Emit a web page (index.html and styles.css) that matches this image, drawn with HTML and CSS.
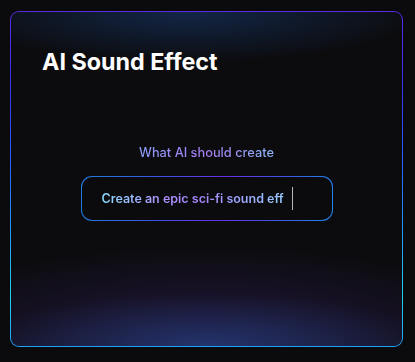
FILE: index.html
```html
<!DOCTYPE html>
<html lang="en">
<head>
<meta charset="utf-8">
<title>AI Sound Effect</title>
<link rel="stylesheet" href="styles.css">
</head>
<body>
  <main class="card">
    <h1 class="title">AI Sound Effect</h1>
    <section class="prompt">
      <label class="prompt-label" for="prompt">What AI should create</label>
      <div class="prompt-box" id="prompt">
        <span class="prompt-text">Create an epic sci-fi sound eff</span>
        <span class="caret"></span>
      </div>
    </section>
  </main>
</body>
</html>
```
FILE: styles.css
```css
html, body {
  margin: 0;
  padding: 0;
  background: #0b0b0d;
}

body {
  font-family: Inter, "Noto Sans", sans-serif;
  width: 415px;
  height: 362px;
  overflow: hidden;
}

.card {
  box-sizing: border-box;
  margin: 11px 0 0 10px;
  width: 393px;
  height: 336px;
  border: 1px solid transparent;
  border-radius: 9px;
  padding: 36px 31px 0;
  background:
    radial-gradient(ellipse 60% 16% at 50% 100%, rgba(35, 85, 160, 0.45), rgba(35, 85, 160, 0) 100%) padding-box,
    radial-gradient(ellipse 85% 30% at 50% 100%, rgba(45, 28, 85, 0.7), rgba(45, 28, 85, 0) 100%) padding-box,
    radial-gradient(ellipse 60% 15% at 45% 0%, rgba(20, 45, 85, 0.8), rgba(20, 45, 85, 0) 100%) padding-box,
    linear-gradient(#0c0c0f, #0c0c0f) padding-box,
    linear-gradient(180deg, #5a2ae0 0%, #3a2ff0 20%, #2a55ff 40%, #1e90ff 62%, #22d0f0 85%, #1ea0ff 100%) border-box;
}

.title {
  margin: 0;
  font-size: 23.3px;
  font-weight: 700;
  line-height: 28px;
  color: #ffffff;
  letter-spacing: 0;
}

.prompt {
  display: flex;
  flex-direction: column;
  align-items: center;
  margin-top: 69px;
}

.prompt-label {
  font-size: 12.8px;
  font-weight: 500;
  line-height: 16px;
  background: linear-gradient(90deg, #8b9cf8 0%, #a67cf2 50%, #8cb8f8 100%);
  -webkit-background-clip: text;
  background-clip: text;
  color: transparent;
}

.prompt-box {
  box-sizing: border-box;
  margin-top: 15px;
  width: 252px;
  height: 45px;
  border: 1px solid transparent;
  border-radius: 11px;
  display: flex;
  align-items: center;
  padding-left: 20px;
  background:
    linear-gradient(#0b0b0e, #0b0b0e) padding-box,
    linear-gradient(100deg, #1e7fe0 0%, #3a55e8 30%, #6a2ee8 55%, #3a5ae8 80%, #1e88f0 100%) border-box;
}

.prompt-text {
  font-size: 12.5px;
  font-weight: 600;
  white-space: nowrap;
  background: linear-gradient(90deg, #8adcff 0%, #ae90ff 35%, #a286fb 55%, #98ccff 100%);
  -webkit-background-clip: text;
  background-clip: text;
  color: transparent;
}

.caret {
  margin-left: 8px;
  width: 1px;
  height: 23px;
  background: #b8b8be;
}
```
